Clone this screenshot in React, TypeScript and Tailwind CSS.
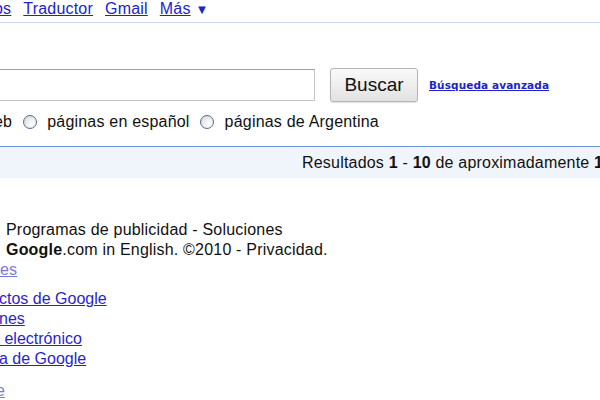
import React from "react"

const radioCls =
    "inline-block w-[14px] h-[14px] rounded-full border border-[#4f6f98] bg-[radial-gradient(circle_at_65%_65%,#ffffff_0%,#eeeeee_45%,#c8ccd4_100%)] shrink-0"

export default function App() {
    return (
        <div
            className="relative w-[600px] h-[400px] overflow-hidden bg-white text-black text-[16px] leading-[20px]"
            style={{ fontFamily: '"Liberation Sans", Arial, sans-serif' }}
        >
            {/* gbar */}
            <div className="h-[23px] border-b border-[#c9d7f1] flex items-start leading-[18px] whitespace-nowrap tracking-[0.2px]">
                <div className="flex gap-[12px] -ml-[6px] text-[#2222cc]">
                    <a className="underline">os</a>
                    <a className="underline">Traductor</a>
                    <a className="underline">Gmail</a>
                    <span className="flex items-baseline gap-[5px]">
                        <a className="underline">Más</a>
                        <span className="text-[13px]">▼</span>
                    </span>
                </div>
            </div>

            {/* search row */}
            <div className="mt-[45px] flex items-start h-[34px] whitespace-nowrap">
                <input
                    className="mt-[1px] ml-[-12px] w-[327px] h-[32px] border border-[#c4c4c4] border-t-[#a0a0a0] bg-white outline-none"
                    type="text"
                />
                <button className="ml-[15px] w-[88px] h-[34px] rounded-[3px] border border-[#b5b5b5] bg-gradient-to-b from-[#fafafa] to-[#e2e2e2] shadow-[0_1px_1px_rgba(0,0,0,0.12)] text-[19px] text-[#111]">
                    Buscar
                </button>
                <a
                    className="ml-[11px] mt-[7px] text-[10.5px] font-bold tracking-[0.1px] underline text-[#2222cc]"
                    style={{ fontFamily: '"DejaVu Sans", Verdana, sans-serif' }}
                >
                    Búsqueda avanzada
                </a>
            </div>

            {/* radios */}
            <div className="mt-[10px] h-[20px] flex items-center whitespace-nowrap text-[#111] tracking-[0.2px]">
                <span className="-ml-[6px]">eb</span>
                <span className={"ml-[11px] " + radioCls} />
                <span className="ml-[10px]">páginas en español</span>
                <span className={"ml-[10px] " + radioCls} />
                <span className="ml-[11px]">páginas de Argentina</span>
            </div>

            {/* results bar */}
            <div className="mt-[14px] border-t border-[#6b90da] bg-[#f0f5fb] h-[32px] pt-[6px] pl-[302px] whitespace-nowrap text-[#111] tracking-[0.2px]">
                Resultados <b>1</b> - <b>10</b> de aproximadamente <b>1.270.000</b> para <b>google</b>
            </div>

            {/* footer */}
            <div className="mt-[42px] whitespace-nowrap tracking-[0.2px]">
                <div className="pl-[6px] text-[#111]">Programas de publicidad - Soluciones</div>
                <div className="pl-[6px] text-[#111]">
                    <b>Google</b>.com in English. ©2010 - Privacidad.
                </div>
                <div>
                    <a className="underline text-[#7a7ad8]">es</a>
                </div>
            </div>

            <div className="mt-[9px] flex flex-col items-start whitespace-nowrap text-[#2a1fcc]">
                <a className="underline -ml-[1px]">ctos de Google</a>
                <a className="underline -ml-[1px]">nes</a>
                <a className="underline">{"\u00a0"}electrónico</a>
                <a className="underline -ml-[1px]">a de Google</a>
            </div>

            <div className="mt-[12px] whitespace-nowrap">
                <a className="underline text-[#7a7ad8] -ml-[4px]">e</a>
            </div>
        </div>
    )
}
